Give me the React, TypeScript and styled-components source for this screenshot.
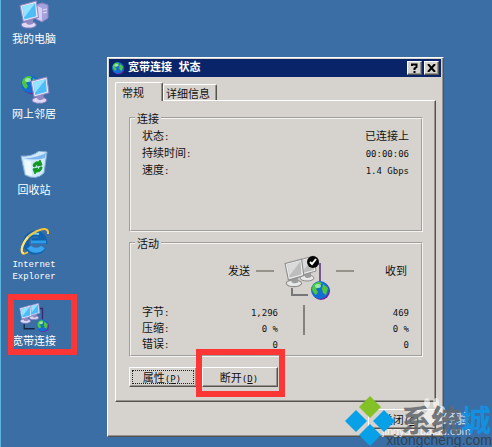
import React from 'react';
import styled, { createGlobalStyle, css } from 'styled-components';

const cjk = '"Noto Sans CJK SC", sans-serif';

const Global = createGlobalStyle`
  * { box-sizing: border-box; }
  body { margin: 0; overflow: hidden; }
  button { font: inherit; color: inherit; }
`;

const Desktop = styled.main`
  position: relative;
  display: flex;
  align-items: flex-start;
  min-height: 100vh;
  overflow: hidden;
  background: #3a6ea5;
  border-left: 1px solid #5ab4dc;
  font: 11px/16px ${cjk};
  color: #111;
`;

const Shortcuts = styled.nav`
  flex: none;
  width: 106px;
  padding-left: 3px;
  display: grid;
  grid-template-columns: 60px;
  grid-template-rows: 75px 76px 76px 75px auto;
  align-items: start;
`;

const Shortcut = styled.a`
  position: relative;
  display: flex;
  flex-direction: column;
  align-items: center;
  color: #fff;
  text-decoration: none;
  text-align: center;
  svg { display: block; width: 32px; height: 30px; }
`;

const Mono = styled.span`
  font-family: "DejaVu Sans Mono", monospace;
  font-size: 9px;
  line-height: 1;
`;

const SlabLabel = styled.span`
  font: 9px/12px "Liberation Mono", monospace;
  padding-top: 2px;
`;

const highlight = css`
  position: absolute;
  z-index: 1;
  border: 6px solid #fc3535;
  pointer-events: none;
`;

const ShortcutMark = styled.span`
  ${highlight}
  inset: -8px -13px -7px 4px;
`;

const ButtonMark = styled.span`
  ${highlight}
  inset: -19px -8px -11px -7px;
`;

const raised = css`
  border: 1px solid;
  border-color: #fff #55534f #55534f #fff;
  box-shadow: inset -1px -1px #96938c;
`;

const Dialog = styled.section`
  flex: 1;
  margin: 57px 48px 0 0;
  padding: 1px;
  background: #d6d3ce;
  ${raised}
`;

const TitleBar = styled.header`
  display: flex;
  align-items: center;
  gap: 2px;
  height: 18px;
  margin-right: 1px;
  padding: 0 2px 0 3px;
  background: #0a246a;
  color: #fff;
  font-family: "DejaVu Sans Mono", ${cjk};
  h1 { flex: 1; margin: 0 0 0 1px; font-family: inherit; font-size: 11px; line-height: 16px; }
`;

const CaptionButton = styled.button`
  display: grid;
  place-items: center;
  width: 15px;
  height: 14px;
  padding: 0;
  background: #d6d3ce;
  ${raised}
`;

const Body = styled.div`
  padding: 5px 6px 6px;
`;

const Tabs = styled.div`
  display: flex;
  align-items: flex-end;
  height: 18px;
`;

const Tab = styled.button<{ $active?: boolean }>`
  position: relative;
  z-index: ${p => (p.$active ? 1 : 0)};
  width: ${p => (p.$active ? 48 : 54)}px;
  height: ${p => (p.$active ? 19 : 16)}px;
  margin-bottom: ${p => (p.$active ? -1 : 0)}px;
  padding: 0 ${p => (p.$active ? 12 : 4)}px 0 0;
  background: #d6d3ce;
  border: solid;
  border-width: 1px 1px 0;
  border-color: #fff #55534f #fff #fff;
  border-radius: 2px 2px 0 0;
  box-shadow: inset -1px 0 #96938c;
  line-height: 16px;
  white-space: nowrap;
`;

const Panel = styled.div`
  padding: 9px 12px 14px 13px;
  ${raised}
`;

const Group = styled.fieldset`
  min-width: 0;
  height: 122px;
  margin: 0 0 3px;
  padding: 0 12px 0 11px;
  border: 2px groove #f4f3f0;
  legend { margin-left: -7px; padding: 0 2px; line-height: 16px; }
`;

const Status = styled.dl`
  display: grid;
  grid-template-columns: auto 1fr;
  grid-auto-rows: 17px;
  align-items: center;
  margin: 0;
  dd { margin: 0; text-align: right; }
`;

const Activity = styled.div`
  display: grid;
  grid-template-columns: 22px 18px 50px 18px 1fr;
  column-gap: 6px;
  height: 52px;
  padding-top: 3px;
  margin-left: 86px;
  line-height: 32px;
  svg { justify-self: end; }
`;

const Received = styled.span`
  text-align: right;
  padding-right: 2px;
`;

const Dash = styled.i`
  height: 2px;
  margin-top: 16px;
  background: #96938c;
`;

const Counters = styled.table`
  width: 100%;
  border-spacing: 0;
  table-layout: fixed;
  th { width: 40px; font-weight: normal; text-align: left; }
  th, td { height: 16px; padding: 0; line-height: 16px; vertical-align: top; }
  td { text-align: right; }
`;

const Sent = styled.td`
  width: 96px;
`;

const Divider = styled.td`
  width: 27px;
  background: linear-gradient(#85827d, #85827d) right 0 top 2px / 2px 30px no-repeat;
`;

const Actions = styled.div`
  display: flex;
  gap: 5px;
  padding-top: 7px;
`;

const PushButton = styled.button<{ $focused?: boolean; $wide?: boolean }>`
  position: relative;
  width: ${p => (p.$wide ? 76 : 68)}px;
  height: 20px;
  padding: 0 2px 0 0;
  background: #d6d3ce;
  line-height: 16px;
  ${raised}
  outline: ${p => (p.$focused ? '1px dotted #222' : 'none')};
  outline-offset: -4px;
`;

const Footer = styled.footer`
  display: flex;
  justify-content: flex-end;
  padding-top: 7px;
`;

const Watermark = styled.aside`
  position: absolute;
  right: 0;
  bottom: 0;
  width: 148px;
  height: 52px;
  pointer-events: none;
  white-space: nowrap;
  > * { position: absolute; }
`;

const Diamonds = styled.svg`
  left: 0;
  top: 0;
`;

const Paw = styled.svg`
  left: 72px;
  top: 2px;
`;

const BaiduName = styled.span`
  left: 99px;
  top: 14px;
  font: bold 13px/18px ${cjk};
  color: rgba(255, 255, 255, 0.7);
`;

const BaiduUrl = styled.span`
  left: 38px;
  top: 29px;
  font: 11px/14px "Liberation Sans", sans-serif;
  color: rgba(255, 255, 255, 0.8);
`;

const SiteName = styled.strong`
  left: 57px;
  top: 6px;
  font: bold 30px/34px ${cjk};
  color: rgba(100, 105, 110, 0.9);
  em { font-style: normal; color: #1590e0; }
`;

const SiteUrl = styled.span`
  right: 0;
  bottom: 0;
  font: 14px/14px "Liberation Sans", sans-serif;
  color: #34424f;
`;

const ScreenShape = ({ grey = false }: { grey?: boolean }) => (
  <>
    <ellipse cx="9" cy="23" rx="7" ry="3" fill={grey ? '#e8e8e8' : '#ded9f4'} stroke={grey ? '#8c8c8c' : '#8179b9'} />
    <path d="m6 18 7-2v6q-4 2-6 0Z" fill={grey ? '#9c9c9c' : '#9288c4'} />
    <path d="M1 5 16 1 18 16 4 20Z" fill={grey ? '#efefef' : '#eeeafc'} stroke={grey ? '#8c8c8c' : '#8f88c4'} />
    <path d="M3 6 15 3 16 15 5 18Z" fill={grey ? '#bdbdbd' : '#4dbdf7'} />
    <path d="M3 6 15 3 5 16Z" fill={grey ? '#dadada' : '#93e2ff'} />
  </>
);

const Globe = () => (
  <>
    <circle cx="10" cy="10" r="9" fill="#7b209b" />
    <circle cx="9" cy="9" r="9" fill="#126ed1" />
    <path d="M2 4Q6-1 11 2L8 6 5 8 7 11 5 14Q1 11 1 7ZM12 3 17 7 15 14 12 12 11 8Z" fill="#4fc73a" />
    <ellipse cx="7" cy="5" rx="3" ry="2" fill="#bef5dc" opacity=".7" />
  </>
);

const NetIcon = ({ grey = false }: { grey?: boolean }) => (
  <svg width="46" height="46" viewBox="0 0 46 46" aria-hidden="true">
    <path d="M8 34v7h16" fill="none" stroke={grey ? '#777' : '#1b2340'} strokeWidth="2" />
    <path d="M30 10h6v17" fill="none" stroke={grey ? '#76568f' : '#38276e'} strokeWidth="2" />
    <g transform="translate(14 1)"><ScreenShape grey={grey} /></g>
    <g transform="translate(0 4) scale(1.1)"><ScreenShape grey={grey} /></g>
    <g transform="translate(27 27)"><Globe /></g>
    {grey && (
      <>
        <circle cx="29" cy="8" r="6" fill="#050505" />
        <path d="m26 8 2 2 4-5" fill="none" stroke="#fff" strokeWidth="2" />
      </>
    )}
  </svg>
);

const ComputerIcon = () => (
  <svg viewBox="0 0 32 30" aria-hidden="true">
    <path d="m18 5 6-2 6 2v13l-6 4-6-3Z" fill="#a6a0dc" stroke="#8a84c4" />
    <path d="m19 6 5 2v13l-5-2Z" fill="#d4d0f3" />
    <path d="m25 10 4-1M25 13l4-1" stroke="#e5e2fb" />
    <g transform="translate(1 0) scale(1.08)"><ScreenShape /></g>
  </svg>
);

const NetworkIcon = () => (
  <svg viewBox="0 0 32 30" aria-hidden="true">
    <g transform="translate(3 0)"><Globe /></g>
    <g transform="translate(12 1) scale(1.05)"><ScreenShape /></g>
  </svg>
);

const BinIcon = () => (
  <svg viewBox="0 0 32 30" aria-hidden="true">
    <path d="M3 5Q14 6 21 0L29 1 26 22Q18 30 7 24Z" fill="#cfe9fb" stroke="#7fa9cf" />
    <path d="M5 7Q16 8 28 2L27 7Q17 10 5 7Z" fill="#7db7ee" />
    <path d="M6 9 13 10 14 25 8 23Z" fill="#f4fcff" opacity=".8" />
    <path d="M15 15q1-5 6-4l1-2 2 5-5 1 1-2q-3 0-3 3ZM24 16q0 5-6 5l-1 2-2-5 5-1-1 2q3 0 3-3Z" fill="#129a20" stroke="#129a20" />
  </svg>
);

const BrowserIcon = () => (
  <svg viewBox="0 0 32 30" aria-hidden="true">
    <path d="M25 20A9 9 0 1 1 26 14H14" fill="none" stroke="#1263ae" strokeWidth="6" />
    <path d="M25 20A9 9 0 0 1 11 20" fill="none" stroke="#3aa5ee" strokeWidth="5" />
    <path d="M10 10Q14 5 21 7" fill="none" stroke="#72cdf5" strokeWidth="2" />
    <path d="M13 15h15" stroke="#2c9de8" strokeWidth="3" />
    <path d="M30 7Q31-1 19 4 8 9 4 20 2 30 10 25" fill="none" stroke="#f5c53b" strokeWidth="2" />
    <path d="M10 10Q5 16 4 21 3 26 6 26" fill="none" stroke="#ffe27a" strokeWidth="2" />
  </svg>
);

const Access = ({ children }: { children: string }) => (
  <Mono>(<u>{children}</u>)</Mono>
);

const status = [
  ['状态', '已连接上'],
  ['持续时间', '00:00:06'],
  ['速度', '1.4 Gbps'],
];

const counters = [
  ['字节', '1,296', '469'],
  ['压缩', '0 %', '0 %'],
  ['错误', '0', '0'],
];

export default function App() {
  return (
    <>
      <Global />
      <Desktop>
        <Shortcuts>
          <Shortcut href="#computer"><ComputerIcon />我的电脑</Shortcut>
          <Shortcut href="#network"><NetworkIcon />网上邻居</Shortcut>
          <Shortcut href="#bin"><BinIcon />回收站</Shortcut>
          <Shortcut href="#browser"><BrowserIcon /><SlabLabel>Internet<br />Explorer</SlabLabel></Shortcut>
          <Shortcut href="#broadband"><NetIcon />宽带连接<ShortcutMark /></Shortcut>
        </Shortcuts>

        <Dialog role="dialog" aria-labelledby="title">
          <TitleBar>
            <svg width="13" height="13" viewBox="0 0 20 20" aria-hidden="true"><Globe /></svg>
            <h1 id="title">宽带连接 状态</h1>
            <CaptionButton aria-label="帮助">
              <svg width="9" height="10" viewBox="0 0 9 10"><path d="M2 3V1.500h4.500V4L4.500 5.500V7M4.500 8v2" fill="none" stroke="#000" strokeWidth="2" /></svg>
            </CaptionButton>
            <CaptionButton aria-label="关闭">
              <svg width="9" height="8" viewBox="0 0 9 8"><path d="m1 0 7 8M8 0 1 8" stroke="#000" strokeWidth="2" /></svg>
            </CaptionButton>
          </TitleBar>
          <Body>
            <Tabs role="tablist">
              <Tab role="tab" aria-selected="true" $active>常规</Tab>
              <Tab role="tab" aria-selected="false">详细信息</Tab>
            </Tabs>
            <Panel role="tabpanel">
              <Group>
                <legend>连接</legend>
                <Status>
                  {status.map(([name, value]) => (
                    <React.Fragment key={name}>
                      <dt>{name}<Mono>:</Mono></dt>
                      <dd>{/\d/.test(value) ? <Mono>{value}</Mono> : value}</dd>
                    </React.Fragment>
                  ))}
                </Status>
              </Group>
              <Group>
                <legend>活动</legend>
                <Activity>
                  <span>发送</span>
                  <Dash />
                  <NetIcon grey />
                  <Dash />
                  <Received>收到</Received>
                </Activity>
                <Counters>
                  <tbody>
                    {counters.map(([name, sent, received], i) => (
                      <tr key={name}>
                        <th scope="row">{name}<Mono>:</Mono></th>
                        <Sent><Mono>{sent}</Mono></Sent>
                        {i === 0 && <Divider rowSpan={3} />}
                        <td><Mono>{received}</Mono></td>
                      </tr>
                    ))}
                  </tbody>
                </Counters>
              </Group>
              <Actions>
                <PushButton $focused>属性<Access>P</Access></PushButton>
                <PushButton $wide>断开<Access>D</Access><ButtonMark /></PushButton>
              </Actions>
            </Panel>
            <Footer>
              <PushButton>关闭<Access>C</Access></PushButton>
            </Footer>
          </Body>
        </Dialog>

        <Watermark>
          <Paw width="32" height="30" viewBox="0 0 32 30" aria-hidden="true">
            <g fill="#fff" opacity=".6">
              <ellipse cx="4" cy="13" rx="3" ry="4" />
              <ellipse cx="11" cy="6" rx="3" ry="5" />
              <ellipse cx="20" cy="6" rx="3" ry="5" />
              <ellipse cx="26" cy="13" rx="3" ry="4" />
              <path d="M15 12q4 0 6 5 6 3 4 8-3 4-10 2-7 2-10-2-1-5 4-8 3-5 6-5Z" />
            </g>
          </Paw>
          <BaiduName>经验</BaiduName>
          <BaiduUrl>jingyan.baidu.com</BaiduUrl>
          <Diamonds width="54" height="52" viewBox="0 0 54 52" aria-hidden="true">
            <path d="m26 1 11 11-11 11-11-11Z" fill="#82c226" />
            <path d="m12 15 11 11-11 11L1 26ZM40 15l11 11-11 11-11-11ZM26 29l11 11-11 11-11-11Z" fill="#08a0e6" />
          </Diamonds>
          <SiteName>系统<em>城</em></SiteName>
          <SiteUrl>xitongcheng.com</SiteUrl>
        </Watermark>
      </Desktop>
    </>
  );
}
